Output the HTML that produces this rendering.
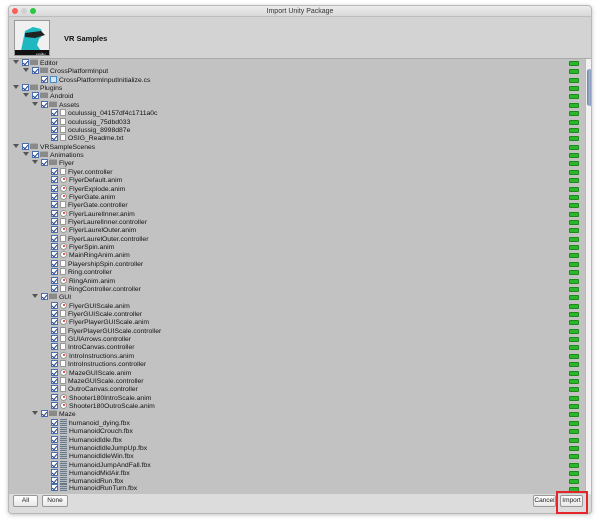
<!DOCTYPE html><html><head><style>
*{margin:0;padding:0;box-sizing:border-box}
body{width:600px;height:523px;background:#fff;position:relative;overflow:hidden;font-family:"Liberation Sans",sans-serif}
.win{position:absolute;left:8px;top:5px;width:584px;height:509px;background:#dcdcdc;border:1px solid #b8b8b8;border-radius:4px;box-shadow:0 1px 4px rgba(0,0,0,.25);overflow:hidden}
.tb{position:absolute;left:0;top:0;width:100%;height:11px;background:linear-gradient(#ececec,#d8d8d8);border-bottom:1px solid #bdbdbd;font-size:7px;line-height:11px;text-align:center;color:#333}
.dot{position:absolute;top:2px;width:6px;height:6px;border-radius:50%}
.hd{position:absolute;left:0;top:11px;width:100%;height:42px;background:#d3d3d3;border-bottom:1px solid #aaa}
.logo{position:absolute;left:5px;top:3px;width:36px;height:36px;background:linear-gradient(135deg,#eee,#ddd);border:1px solid #999;overflow:hidden}
.list{position:absolute;left:0;top:53px;width:576px;height:435px;background:#c2c2c2}
.sb{position:absolute;left:576px;top:53px;width:8px;height:435px;background:#f2f2f2;border-left:1px solid #bbb}
.r{position:absolute;height:8px;font-size:6.8px;line-height:8px;color:#111;display:flex;align-items:center;white-space:nowrap}
.a,.c,.f,.d,.an,.fb,.cs{position:relative;top:-2px}
.a{width:10px;height:8px}
.a:before{content:"";position:absolute;left:1px;top:2px;border-left:3px solid transparent;border-right:3px solid transparent;border-top:4px solid #555}
.c{width:7px;height:7px;background:#fff;border:1px solid #4a6fb0;margin-right:1px}
.c:after{content:"";position:absolute;left:1px;top:0;width:2px;height:4px;border-right:1.5px solid #1f3f8f;border-bottom:1.5px solid #1f3f8f;transform:rotate(40deg)}
.f{width:8px;height:6px;background:#8a8a8a;border-top:1px solid #aaa;margin-right:2px}
.d{width:6px;height:7px;background:#fff;border:1px solid #999;margin:0 2px 0 1px}
.an{width:7px;height:7px;border-radius:50%;background:#fff;border:1px solid #999;margin:0 2px 0 1px}
.an:after{content:"";position:absolute;left:1.5px;top:1.5px;width:2px;height:2px;border-radius:50%;background:#d22}
.fb{width:7px;height:7px;background:repeating-linear-gradient(#6a7a88 0 1px,#b0b8c0 1px 2px);margin:0 2px 0 1px}
.cs{width:7px;height:7px;background:#cfe4f5;border:1px solid #4a8ac8;margin:0 2px 0 1px}
.n{position:absolute;left:561px;width:10px;height:5px;background:#2db52d;border:1px solid #1a8a1a;border-radius:1px}
.btn{position:absolute;top:495px;height:12px;background:linear-gradient(#fff,#e8e8e8);border:1px solid #999;border-radius:2px;font-size:6.5px;line-height:10px;text-align:center;color:#222}
</style></head><body>
<div class="win">
<div class="tb">Import Unity Package<span class="dot" style="left:3px;background:#fc5f57"></span><span class="dot" style="left:12px;background:#d0d0d0"></span><span class="dot" style="left:21px;background:#2ac840"></span></div>
<div class="hd"><div class="logo"><svg width="36" height="36"><rect width="36" height="36" fill="#f0f0f0"/><path d="M6 30 L8 20 L10 10 L18 6 L26 8 L28 14 L24 18 L22 24 L26 30 Z" fill="#1fb8c0"/><path d="M10 12 L26 10 L30 14 L20 17 L10 16 Z" fill="#222"/><rect y="29" width="36" height="7" fill="#111"/><text x="21" y="35" font-size="4.5" fill="#fff" font-family="Liberation Sans">unity</text></svg></div>
<div style="position:absolute;left:55px;top:17px;font-size:7.5px;font-weight:bold;color:#111">VR Samples</div></div>
<div class="list"></div>
<div class="sb"><div style="position:absolute;left:1px;top:10px;width:5px;height:37px;border-radius:3px;background:linear-gradient(90deg,#6a80a8,#a4b4cc,#6a80a8)"></div></div>
</div>
<div style="position:absolute;left:8px;top:59px;width:576px;height:434px">
<div class="r" style="top:1px;left:4px"><i class="a"></i><b class="c"></b><i class="f"></i>Editor</div>
<div class="r" style="top:9px;left:14px"><i class="a"></i><b class="c"></b><i class="f"></i>CrossPlatformInput</div>
<div class="r" style="top:18px;left:33px"><b class="c"></b><i class="cs"></i>CrossPlatformInputInitialize.cs</div>
<div class="r" style="top:26px;left:4px"><i class="a"></i><b class="c"></b><i class="f"></i>Plugins</div>
<div class="r" style="top:34px;left:14px"><i class="a"></i><b class="c"></b><i class="f"></i>Android</div>
<div class="r" style="top:43px;left:23px"><i class="a"></i><b class="c"></b><i class="f"></i>Assets</div>
<div class="r" style="top:51px;left:43px"><b class="c"></b><i class="d"></i>oculussig_04157df4c1711a0c</div>
<div class="r" style="top:60px;left:43px"><b class="c"></b><i class="d"></i>oculussig_75dbd033</div>
<div class="r" style="top:68px;left:43px"><b class="c"></b><i class="d"></i>oculussig_8998d87e</div>
<div class="r" style="top:76px;left:43px"><b class="c"></b><i class="d"></i>OSIG_Readme.txt</div>
<div class="r" style="top:85px;left:4px"><i class="a"></i><b class="c"></b><i class="f"></i>VRSampleScenes</div>
<div class="r" style="top:93px;left:14px"><i class="a"></i><b class="c"></b><i class="f"></i>Animations</div>
<div class="r" style="top:101px;left:23px"><i class="a"></i><b class="c"></b><i class="f"></i>Flyer</div>
<div class="r" style="top:110px;left:43px"><b class="c"></b><i class="d"></i>Flyer.controller</div>
<div class="r" style="top:118px;left:43px"><b class="c"></b><i class="an"></i>FlyerDefault.anim</div>
<div class="r" style="top:127px;left:43px"><b class="c"></b><i class="an"></i>FlyerExplode.anim</div>
<div class="r" style="top:135px;left:43px"><b class="c"></b><i class="an"></i>FlyerGate.anim</div>
<div class="r" style="top:143px;left:43px"><b class="c"></b><i class="d"></i>FlyerGate.controller</div>
<div class="r" style="top:152px;left:43px"><b class="c"></b><i class="an"></i>FlyerLaurelInner.anim</div>
<div class="r" style="top:160px;left:43px"><b class="c"></b><i class="d"></i>FlyerLaurelInner.controller</div>
<div class="r" style="top:168px;left:43px"><b class="c"></b><i class="an"></i>FlyerLaurelOuter.anim</div>
<div class="r" style="top:177px;left:43px"><b class="c"></b><i class="d"></i>FlyerLaurelOuter.controller</div>
<div class="r" style="top:185px;left:43px"><b class="c"></b><i class="an"></i>FlyerSpin.anim</div>
<div class="r" style="top:193px;left:43px"><b class="c"></b><i class="an"></i>MainRingAnim.anim</div>
<div class="r" style="top:202px;left:43px"><b class="c"></b><i class="d"></i>PlayershipSpin.controller</div>
<div class="r" style="top:210px;left:43px"><b class="c"></b><i class="d"></i>Ring.controller</div>
<div class="r" style="top:219px;left:43px"><b class="c"></b><i class="an"></i>RingAnim.anim</div>
<div class="r" style="top:227px;left:43px"><b class="c"></b><i class="d"></i>RingController.controller</div>
<div class="r" style="top:235px;left:23px"><i class="a"></i><b class="c"></b><i class="f"></i>GUI</div>
<div class="r" style="top:244px;left:43px"><b class="c"></b><i class="an"></i>FlyerGUIScale.anim</div>
<div class="r" style="top:252px;left:43px"><b class="c"></b><i class="d"></i>FlyerGUIScale.controller</div>
<div class="r" style="top:260px;left:43px"><b class="c"></b><i class="an"></i>FlyerPlayerGUIScale.anim</div>
<div class="r" style="top:269px;left:43px"><b class="c"></b><i class="d"></i>FlyerPlayerGUIScale.controller</div>
<div class="r" style="top:277px;left:43px"><b class="c"></b><i class="d"></i>GUIArrows.controller</div>
<div class="r" style="top:285px;left:43px"><b class="c"></b><i class="d"></i>IntroCanvas.controller</div>
<div class="r" style="top:294px;left:43px"><b class="c"></b><i class="an"></i>IntroInstructions.anim</div>
<div class="r" style="top:302px;left:43px"><b class="c"></b><i class="d"></i>IntroInstructions.controller</div>
<div class="r" style="top:311px;left:43px"><b class="c"></b><i class="an"></i>MazeGUIScale.anim</div>
<div class="r" style="top:319px;left:43px"><b class="c"></b><i class="d"></i>MazeGUIScale.controller</div>
<div class="r" style="top:327px;left:43px"><b class="c"></b><i class="d"></i>OutroCanvas.controller</div>
<div class="r" style="top:336px;left:43px"><b class="c"></b><i class="an"></i>Shooter180IntroScale.anim</div>
<div class="r" style="top:344px;left:43px"><b class="c"></b><i class="an"></i>Shooter180OutroScale.anim</div>
<div class="r" style="top:352px;left:23px"><i class="a"></i><b class="c"></b><i class="f"></i>Maze</div>
<div class="r" style="top:361px;left:43px"><b class="c"></b><i class="fb"></i>humanoid_dying.fbx</div>
<div class="r" style="top:369px;left:43px"><b class="c"></b><i class="fb"></i>HumanoidCrouch.fbx</div>
<div class="r" style="top:378px;left:43px"><b class="c"></b><i class="fb"></i>HumanoidIdle.fbx</div>
<div class="r" style="top:386px;left:43px"><b class="c"></b><i class="fb"></i>HumanoidIdleJumpUp.fbx</div>
<div class="r" style="top:394px;left:43px"><b class="c"></b><i class="fb"></i>HumanoidIdleWin.fbx</div>
<div class="r" style="top:403px;left:43px"><b class="c"></b><i class="fb"></i>HumanoidJumpAndFall.fbx</div>
<div class="r" style="top:411px;left:43px"><b class="c"></b><i class="fb"></i>HumanoidMidAir.fbx</div>
<div class="r" style="top:419px;left:43px"><b class="c"></b><i class="fb"></i>HumanoidRun.fbx</div>
<div class="r" style="top:426px;left:43px"><b class="c"></b><i class="fb"></i>HumanoidRunTurn.fbx</div>
<i class="n" style="top:2px"></i><i class="n" style="top:10px"></i><i class="n" style="top:19px"></i><i class="n" style="top:27px"></i><i class="n" style="top:35px"></i><i class="n" style="top:44px"></i><i class="n" style="top:52px"></i><i class="n" style="top:61px"></i><i class="n" style="top:69px"></i><i class="n" style="top:77px"></i><i class="n" style="top:86px"></i><i class="n" style="top:94px"></i><i class="n" style="top:102px"></i><i class="n" style="top:111px"></i><i class="n" style="top:119px"></i><i class="n" style="top:128px"></i><i class="n" style="top:136px"></i><i class="n" style="top:144px"></i><i class="n" style="top:153px"></i><i class="n" style="top:161px"></i><i class="n" style="top:169px"></i><i class="n" style="top:178px"></i><i class="n" style="top:186px"></i><i class="n" style="top:194px"></i><i class="n" style="top:203px"></i><i class="n" style="top:211px"></i><i class="n" style="top:220px"></i><i class="n" style="top:228px"></i><i class="n" style="top:236px"></i><i class="n" style="top:245px"></i><i class="n" style="top:253px"></i><i class="n" style="top:261px"></i><i class="n" style="top:270px"></i><i class="n" style="top:278px"></i><i class="n" style="top:286px"></i><i class="n" style="top:295px"></i><i class="n" style="top:303px"></i><i class="n" style="top:312px"></i><i class="n" style="top:320px"></i><i class="n" style="top:328px"></i><i class="n" style="top:337px"></i><i class="n" style="top:345px"></i><i class="n" style="top:353px"></i><i class="n" style="top:362px"></i><i class="n" style="top:370px"></i><i class="n" style="top:379px"></i><i class="n" style="top:387px"></i><i class="n" style="top:395px"></i><i class="n" style="top:404px"></i><i class="n" style="top:412px"></i><i class="n" style="top:420px"></i><i class="n" style="top:428px"></i>
</div>
<div class="btn" style="left:13px;width:25px">All</div>
<div class="btn" style="left:42px;width:26px">None</div>
<div class="btn" style="left:533px;width:23px">Cancel</div>
<div class="btn" style="left:560px;width:23px">Import</div>
<div style="position:absolute;left:556px;top:491px;width:32px;height:23px;border:2px solid #e3262a"></div>
</body></html>
